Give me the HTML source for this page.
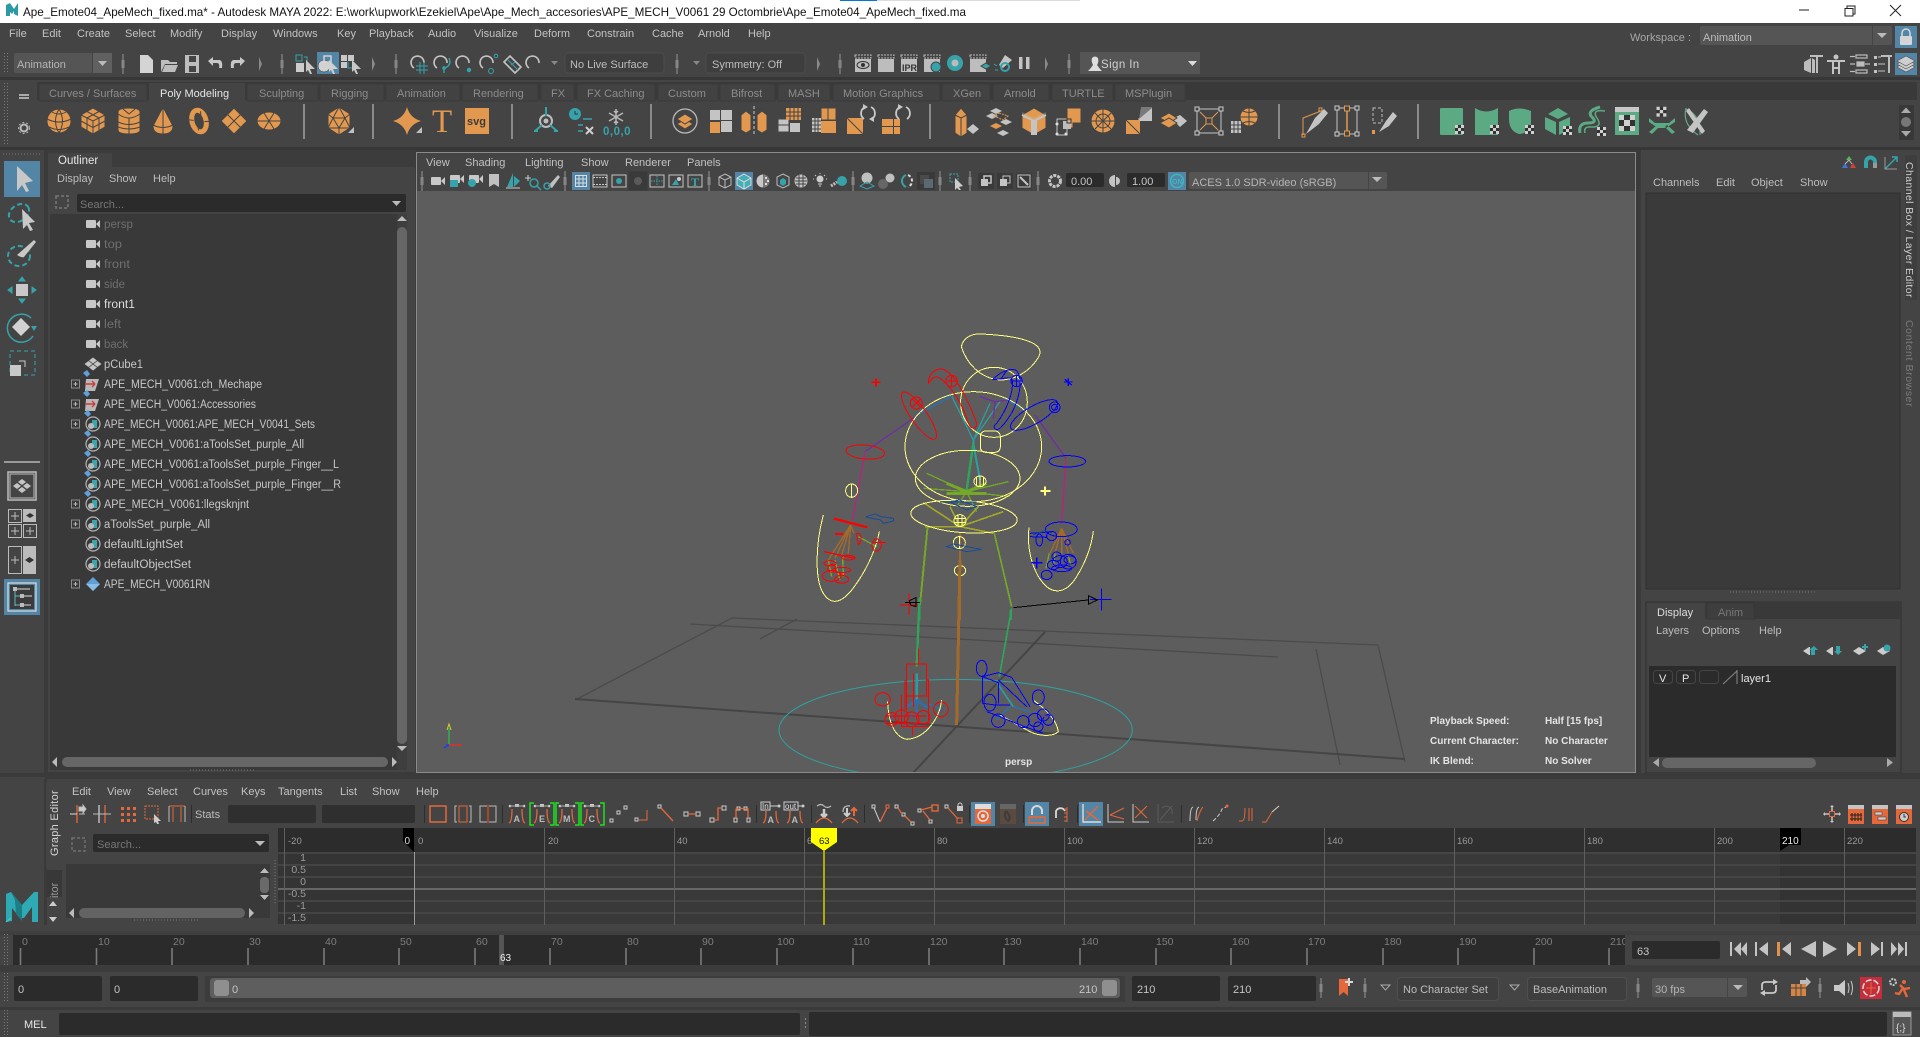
<!DOCTYPE html>
<html><head><meta charset="utf-8"><title>Maya</title>
<style>
html,body{margin:0;padding:0;background:#444;overflow:hidden}
svg{display:block}
text{font-family:"Liberation Sans",sans-serif;font-size:11px;fill:#c2c2c2}
.d{fill:#8c8c8c}.b{fill:#e6e6e6}.o{font-size:11.5px;fill:#c8c8c8}.od{font-size:11.5px;fill:#6f6f6f}
.h{font-weight:bold;font-size:10px;fill:#e4e4e4}
.t{font-size:10.5px;fill:#7d7d7d}.g{font-size:9.5px;fill:#9a9a9a}
.or{fill:#e2994f;stroke:#444;stroke-width:1}
.orn{fill:none;stroke:#444;stroke-width:1}
.gy{fill:#c4c4c4}
.ln{fill:none;stroke:#c4c4c4;stroke-width:1.5}
.te{fill:#36a3ab}.tl{fill:none;stroke:#36a3ab;stroke-width:1.6}
.gr{fill:#5caa84}
.r{fill:none;stroke:#e4683a;stroke-width:1.3}
.rf{fill:#e4683a}
.w{fill:none;stroke:#bdbdbd;stroke-width:1.2}
.wf{fill:#bdbdbd}
</style></head><body>
<svg xmlns="http://www.w3.org/2000/svg" width="1920" height="1037" viewBox="0 0 1920 1037">
<defs>
<clipPath id="vp"><rect x="417" y="191" width="1218" height="581"/></clipPath>
<clipPath id="sl"><rect x="13" y="935" width="1612" height="30"/></clipPath>
<g id="sep"><rect x="-1" y="-10" width="2" height="20" fill="#6d6d6d"/><rect x="-1.5" y="-4" width="3" height="8" fill="#868686"/></g>
<path id="tri" d="M-1-7L2 0L-1 7Z" fill="#8a8a8a"/>
<g id="cam"><rect x="-7" y="-4" width="10" height="8" rx="1" fill="#c8c8c8"/><path d="M3 0L7-4V4Z" fill="#c8c8c8"/></g>
<g id="exp"><rect x="-4" y="-4" width="8" height="8" fill="none" stroke="#8c8c8c"/><path d="M-2 0H2M0-2V2" stroke="#bbb"/></g>
<g id="set"><path d="M-9-11L-5-14L-2-10L-5-7Z" fill="#5fa0d8"/><circle cx="0" cy="0" r="7" fill="none" stroke="#b4b4b4" stroke-width="1.2"/><path d="M-1-4H4V4H-1Z" fill="#3ea4ab"/><circle cx="-2" cy="2" r="3" fill="#bbb"/></g>
<g id="set0"><circle cx="0" cy="0" r="7" fill="none" stroke="#b4b4b4" stroke-width="1.2"/><path d="M-1-4H4V4H-1Z" fill="#3ea4ab"/><circle cx="-2" cy="2" r="3" fill="#bbb"/></g>
<g id="chr"><path d="M-9-11L-5-14L-2-10L-5-7Z" fill="#5fa0d8"/><path d="M-6-5H7L3 7H-7Z" fill="#b8b8b8"/><path d="M-7 0H3M3 0L0-3M3 0L0 3" stroke="#d03a3a" stroke-width="1.4" fill="none"/></g>
<g id="ck"><rect width="9" height="9" fill="#333"/><path d="M0 0h3v3H0zM6 0h3v3H6zM3 3h3v3H3zM0 6h3v3H0zM6 6h3v3H6z" fill="#d0d0d0"/></g>
<g id="clap"><rect x="-8" y="-9" width="16" height="3" fill="none" stroke="#bbb" stroke-dasharray="2 1"/><rect x="-8" y="-5" width="16" height="13" fill="#bdbdbd"/></g>
<g id="dia"><path d="M0-3L4 0L0 3L-4 0Z" fill="#c4c4c4"/></g>
<path id="mag" d="M-4 6A6.500 6.500 0 1 1 6 1" fill="none" stroke="#c4c4c4" stroke-width="1.600"/>
</defs>

<!-- backgrounds -->
<rect width="1920" height="1037" fill="#444"/>
<rect width="1920" height="23" fill="#fff"/>
<rect x="840" width="37" height="1" fill="#0078d7"/><rect x="877" width="203" height="1" fill="#dcdcdc"/>
<path d="M7 16V5L11 3L15 9L19 3V16L15 14V11L13 14L11 12V16Z" fill="#2a9aa5" transform="translate(-1 0)"/>
<text x="23" y="16" textLength="943" lengthAdjust="spacingAndGlyphs" style="font-size:12px;fill:#111">Ape_Emote04_ApeMech_fixed.ma* - Autodesk MAYA 2022: E:\work\upwork\Ezekiel\Ape\Ape_Mech_accesories\APE_MECH_V0061 29 Octombrie\Ape_Emote04_ApeMech_fixed.ma</text>
<path d="M1799 10H1809" stroke="#222"/>
<path d="M1845 8.5H1853V16H1845ZM1847 8.5V6H1855V14H1853" fill="none" stroke="#222"/>
<path d="M1890 5L1901 16M1901 5L1890 16" stroke="#222"/>

<!-- menu -->
<text x="9" y="37">File</text><text x="42" y="37">Edit</text><text x="77" y="37">Create</text><text x="125" y="37">Select</text><text x="170" y="37">Modify</text><text x="221" y="37">Display</text><text x="273" y="37">Windows</text><text x="337" y="37">Key</text><text x="369" y="37">Playback</text><text x="428" y="37">Audio</text><text x="474" y="37">Visualize</text><text x="534" y="37">Deform</text><text x="587" y="37">Constrain</text><text x="652" y="37">Cache</text><text x="698" y="37">Arnold</text><text x="748" y="37">Help</text>
<text x="1630" y="41" class="d" style="fill:#a8a8a8">Workspace :</text>
<rect x="1700" y="26" width="192" height="19" rx="2" fill="#555"/><rect x="1872" y="26" width="1" height="19" fill="#444"/>
<text x="1703" y="41" style="fill:#bdbdbd">Animation</text><path d="M1877 33H1887L1882 38Z" fill="#bbb"/>
<rect x="1895" y="26" width="22" height="22" fill="#5285a6"/><rect x="1900" y="36" width="12" height="9" rx="1" fill="#d5d5d5"/><path d="M1902 36V33a4 4 0 018 0V36" fill="none" stroke="#d5d5d5" stroke-width="1.6"/>
<rect y="77" width="1920" height="3" fill="#373737"/>

<!-- status line -->
<path d="M4.5 53V74M7.5 53V74" stroke="#777" stroke-dasharray="1 2"/>
<rect x="14" y="53" width="98" height="20" rx="2" fill="#555"/><rect x="93" y="53" width="19" height="20" fill="#606060"/><rect x="92" y="53" width="1" height="20" fill="#444"/>
<text x="17" y="68" style="fill:#b5b5b5">Animation</text><path d="M98 61H107L102.500 66Z" fill="#bbb"/>
<use href="#sep" x="123" y="64"/>
<path d="M140 55H148L153 60V73H140Z" fill="#d4d4d4"/>
<path d="M161 60H168L170 62H177V64H165L161 72ZM165 65H178L175 72H162Z" fill="#bdbdbd"/>
<path d="M185 55H199V73H185ZM189 56V62H196V56M189 66H196V72H189Z" fill="#bdbdbd"/><rect x="189" y="56" width="7" height="5" fill="#444"/><rect x="189" y="66" width="7" height="6" fill="#444"/>
<path d="M208 61L213 57V60H219Q223 60 222 68H219Q220 63 217 63H213V66Z" fill="#c8c8c8"/>
<path d="M245 61L240 57V60H234Q230 60 231 68H234Q233 63 236 63H240V66Z" fill="#c8c8c8"/>
<use href="#tri" x="260" y="64"/><use href="#sep" x="282" y="64"/>
<g transform="translate(305 64)"><rect x="-9" y="-9" width="6" height="6" fill="none" stroke="#36a3ab"/><rect x="-9" y="-1" width="8" height="9" fill="#ccc"/><path d="M-1-7H2V-2" fill="none" stroke="#36a3ab"/><path d="M1-4L10 5H5L7 10L5 10L3 6L1 8Z" fill="#c8c8c8"/></g>
<rect x="317" y="52" width="22" height="22" fill="#5285a6"/>
<g transform="translate(328 64)"><circle cx="-4" cy="2" r="6" fill="#d2d2d2" stroke="#222" stroke-width=".5"/><rect x="-4" y="-8" width="7" height="6" fill="none" stroke="#d8d8d8" stroke-width="1.4"/><path d="M1-4L10 5H5L7 10L5 10L3 6L1 8Z" fill="#d0d0d0"/></g>
<g transform="translate(351 64)"><path d="M-10-9H-4V-3H-10ZM-3-9H3V-3H-3ZM-10-2H-4V4H-10Z" fill="#c8c8c8"/><path d="M-3-2V4H1" fill="none" stroke="#36a3ab"/><path d="M1-4L10 5H5L7 10L5 10L3 6L1 8Z" fill="#c8c8c8"/></g>
<use href="#tri" x="373" y="64"/><use href="#sep" x="396" y="64"/>
<use href="#mag" x="418" y="62"/><use href="#mag" x="441" y="62"/><use href="#mag" x="463" y="62"/><use href="#mag" x="487" y="62"/><use href="#mag" x="533" y="62"/>
<path d="M504 62l6-6l11 11l-6 6z" fill="none" stroke="#c4c4c4" stroke-width="1.600"/>
<path d="M416 66H428M416 70H428M420 62V74M424 62V74" stroke="#36a3ab" fill="none"/>
<path d="M449 58Q452 65 445 68M444 68V73" stroke="#36a3ab" fill="none" stroke-width="1.400"/><circle cx="444" cy="68" r="1.800" fill="#36a3ab"/>
<circle cx="469" cy="70" r="2.200" fill="#36a3ab"/>
<circle cx="496" cy="56" r="1.800" fill="none" stroke="#36a3ab"/><circle cx="491" cy="71" r="2.500" fill="none" stroke="#36a3ab"/>
<path d="M508 60L518 70M511 65L515 62" stroke="#36a3ab" fill="none"/>
<path d="M551 61H558L554.500 65Z" fill="#888"/>
<rect x="565" y="53" width="99" height="20" rx="3" fill="#3e3e3e" stroke="#4c4c4c"/><text x="570" y="68" style="fill:#bdbdbd">No Live Surface</text>
<use href="#sep" x="677" y="64"/><path d="M693 61H700L696.500 65Z" fill="#888"/>
<rect x="706" y="53" width="99" height="20" rx="3" fill="#3e3e3e" stroke="#4c4c4c"/><text x="712" y="68" style="fill:#bdbdbd">Symmetry: Off</text>
<use href="#tri" x="818" y="64"/><use href="#sep" x="840" y="64"/>
<use href="#clap" x="863" y="64"/><ellipse cx="863" cy="65" rx="6" ry="3.500" fill="none" stroke="#333"/><circle cx="863" cy="65" r="2" fill="#333"/>
<use href="#clap" x="886" y="64"/>
<use href="#clap" x="909" y="64"/><text x="902" y="71" style="font-size:9px;fill:#333;font-weight:bold">IPR</text>
<use href="#clap" x="932" y="64"/><circle cx="936" cy="67" r="5" fill="#36a3ab" stroke="#444"/>
<circle cx="955" cy="63" r="8" fill="#36a3ab"/><circle cx="955" cy="63" r="3.500" fill="#bbb"/>
<use href="#clap" x="978" y="64"/><path d="M981 66L986 63L991 66L986 69Z" fill="#36a3ab" stroke="#444"/>
<path d="M1005 55L1012 60L1003 68L999 65Z" fill="#c4c4c4"/><circle cx="1005" cy="67" r="4" fill="none" stroke="#36a3ab" stroke-width="2"/><path d="M994 64L997 66M995 70H998" stroke="#36a3ab"/>
<rect x="1019" y="57" width="3.500" height="12" fill="#c4c4c4"/><rect x="1026" y="57" width="3.500" height="12" fill="#c4c4c4"/>
<use href="#tri" x="1046" y="64"/><use href="#sep" x="1069" y="64"/>
<rect x="1080" y="52" width="120" height="22" fill="#555"/>
<path d="M1090 69L1093 65Q1091 61 1092 58Q1095 55 1098 58Q1099 62 1097 65L1100 69L1102 71H1088Z" fill="#ddd"/><text x="1101" y="68" style="fill:#d0d0d0;font-size:11.500px;letter-spacing:.4px">Sign In</text><path d="M1188 61H1197L1192.500 66Z" fill="#ddd"/>
<g transform="translate(1813 64)"><path d="M-9-2L-2-6V9L-9 6Z" fill="#bdbdbd"/><path d="M-1-6L2-4V9L-1 9Z" fill="#bdbdbd"/><path d="M-3-9H10V-7H5V9H3V-7H-3Z" fill="#bdbdbd"/></g>
<g transform="translate(1836 64)"><circle cy="-7" r="2.500" fill="#c4c4c4"/><path d="M-9-3H9M-3-3V4M3-3V4M-3 4V10M3 4V10M-3 4H3" stroke="#c4c4c4" stroke-width="2" fill="none"/></g>
<g transform="translate(1860 64)" class="w"><rect x="-4" y="-9" width="11" height="3"/><rect x="-4" y="6" width="11" height="3"/><path d="M-10-7.500H-5M-10 7.500H-5M-10 0H-5M5 0H10"/><rect x="-3" y="-2" width="7" height="4" fill="#bdbdbd"/></g>
<g transform="translate(1883 64)"><path d="M-9-8h3v3h-3zM-9-1h3v3h-3zM-9 6h3v3h-3z" fill="#c4c4c4"/><path d="M-5-7H-2M-5 0H2M-5 7H2" stroke="#c4c4c4"/><path d="M-2-9H9V-7H7V9H5V-7H-2Z" fill="#bdbdbd"/></g>
<rect x="1895" y="53" width="22" height="22" fill="#5285a6"/>
<g transform="translate(1906 64)" fill="#cfcfcf" stroke="#555" stroke-width=".7"><path d="M-9 3L0 8L9 3L0-2Z"/><path d="M-9 0L0 5L9 0L0-5Z"/><path d="M-9-3L0 2L9-3L0-8Z"/></g>

<!-- shelf -->
<path d="M4.500 83V145M7.500 83V145" stroke="#777" stroke-dasharray="1 2"/>
<rect x="14" y="82" width="1903" height="65" fill="#3e3e3e"/>
<rect x="37" y="82" width="1880" height="18" fill="#393939"/>
<rect x="14" y="82" width="23" height="65" fill="#444"/>
<rect x="19" y="94" width="10" height="2" fill="#aaa"/><rect x="19" y="97" width="10" height="2" fill="#aaa"/>
<circle cx="24" cy="128" r="3.500" fill="none" stroke="#bbb" stroke-width="2"/><circle cx="24" cy="128" r="5.500" fill="none" stroke="#bbb" stroke-dasharray="2 2"/>
<rect x="37" y="100" width="1880" height="47" fill="#444"/>
<g fill="#424242" stroke="#3a3a3a">
<rect x="39" y="84" width="108" height="17"/><rect x="247" y="84" width="71" height="17"/><rect x="320" y="84" width="64" height="17"/><rect x="386" y="84" width="74" height="17"/><rect x="462" y="84" width="76" height="17"/><rect x="541" y="84" width="33" height="17"/><rect x="577" y="84" width="78" height="17"/><rect x="658" y="84" width="60" height="17"/><rect x="720" y="84" width="55" height="17"/><rect x="778" y="84" width="52" height="17"/><rect x="833" y="84" width="107" height="17"/><rect x="942" y="84" width="48" height="17"/><rect x="993" y="84" width="56" height="17"/><rect x="1052" y="84" width="61" height="17"/><rect x="1115" y="84" width="70" height="17"/>
</g>
<rect x="149" y="83" width="96" height="18" fill="#444"/>
<g class="d">
<text class="d" x="49" y="97">Curves / Surfaces</text><text class="b" x="160" y="97">Poly Modeling</text><text class="d" x="259" y="97">Sculpting</text><text class="d" x="331" y="97">Rigging</text><text class="d" x="397" y="97">Animation</text><text class="d" x="473" y="97">Rendering</text><text class="d" x="551" y="97">FX</text><text class="d" x="587" y="97">FX Caching</text><text class="d" x="668" y="97">Custom</text><text class="d" x="731" y="97">Bifrost</text><text class="d" x="788" y="97">MASH</text><text class="d" x="843" y="97">Motion Graphics</text><text class="d" x="953" y="97">XGen</text><text class="d" x="1004" y="97">Arnold</text><text class="d" x="1062" y="97">TURTLE</text><text class="d" x="1125" y="97">MSPlugin</text>
</g>
<!-- shelf separators -->
<g fill="#8a8a8a"><rect x="303" y="104" width="2" height="35"/><rect x="372" y="104" width="2" height="35"/><rect x="511" y="104" width="2" height="35"/><rect x="650" y="104" width="2" height="35"/><rect x="929" y="104" width="2" height="35"/><rect x="1278" y="104" width="2" height="35"/><rect x="1417" y="104" width="2" height="35"/></g>
<!-- poly -->
<g transform="translate(59 121)"><circle r="12" class="or"/><path class="orn" d="M-12-2Q0 4 12-2M-10 6Q0 11 10 6M-7-9Q0-5 7-9M0-12Q-7 0 0 12M0-12Q7 0 0 12"/></g>
<g transform="translate(93 121)"><path class="or" d="M0-13L12-6V6L0 13L-12 6V-6Z"/><path class="orn" d="M-12-6L0 0L12-6M0 0V13M-6-9.500L6-3M6-9.500L-6-3M-12 0L0 6.500L12 0M-6-3V10M6-3V10"/></g>
<g transform="translate(129 121)"><path class="or" d="M-11-9Q-11-13 0-13T11-9V9Q11 13 0 13T-11 9Z"/><path class="orn" d="M-11-7Q-5-3 0-3T11-7M-11 1Q0 6 11 1M-11 6Q0 10 11 6M-6-12L0-7L6-12M0-3V13"/></g>
<g transform="translate(163 121)"><path class="or" d="M0-14L10 5Q10 13 0 13T-10 5Z"/><path class="orn" d="M0-14V13M-10 4Q0 9 10 4"/></g>
<g transform="translate(199 121) rotate(-15)"><ellipse rx="7" ry="11" fill="none" stroke="#e2994f" stroke-width="5"/><path class="orn" d="M-10-4L-5-2M4-9L3-4M10 3L5 2M-3 9L-2 4"/></g>
<g transform="translate(234 121)"><path class="or" d="M0-13L13 0L0 13L-13 0Z"/><path class="orn" d="M-6.500-6.500L6.500 6.500M6.500-6.500L-6.500 6.500"/></g>
<g transform="translate(269 121)"><ellipse rx="12" ry="9" class="or"/><path class="orn" d="M-12 0H12M-5-8L5 8M5-8L-5 8"/></g>
<g transform="translate(339 121)"><path class="or" d="M0-14L11-7V7L0 14L-11 7V-7Z"/><path class="orn" d="M0-14L-6-3L6-3ZM-11-7L-6-3L-11 7M11-7L6-3L11 7M-6-3L0 7L6-3M-11 7L0 7L11 7M0 7V14"/><path d="M9 12L15 6V12Z" fill="#c0c0c0"/></g>
<g transform="translate(407 121)"><path d="M0-14Q3-3 14 0Q3 3 0 14Q-3 3-14 0Q-3-3 0-14Z" fill="#e2994f"/><path d="M9 12L15 6V12Z" fill="#c0c0c0"/></g>
<text x="432" y="132" style="font-family:'Liberation Serif',serif;font-size:33px;fill:#e2994f">T</text>
<rect x="465" y="108" width="24" height="26" fill="#e2994f"/><text x="467" y="125" style="font-size:11px;font-weight:bold;fill:#3a3a3a">svg</text>
<!-- teal tools -->
<g transform="translate(546 121)"><circle r="6" fill="none" stroke="#bdbdbd" stroke-width="2"/><circle r="2.500" fill="#bdbdbd"/><path d="M0-14V-5M-4 4L-11 10M4 4L11 10" stroke="#36a3ab" stroke-width="2"/><path d="M-12 10H-8M8 10H12" stroke="#36a3ab" stroke-width="2"/></g>
<g transform="translate(580 121)"><circle cx="-5" cy="-7" r="6" fill="#36a3ab"/><path d="M-5-10V-7H-2" stroke="#333" fill="none"/><path d="M3-2H12M-2 4H3M-2 10H3" stroke="#36a3ab" stroke-width="1.400"/><path d="M6 6L13 13M13 6L6 13" stroke="#d0d0d0" stroke-width="2"/></g>
<g transform="translate(616 118)" stroke="#b8b8b8" stroke-width="1.500" fill="none"><path d="M0-9V7M-7-5L7 3M7-5L-7 3M-2-7L0-5L2-7M-2 5L0 3L2 5"/></g>
<text x="603" y="135" style="font-size:11.500px;fill:#36a3ab;font-weight:bold;letter-spacing:.5px">0,0,0</text>
<!-- edit mesh -->
<g transform="translate(685 121)"><circle r="12" fill="none" stroke="#b8b8b8" stroke-width="1.300"/><path d="M-8 3L0 8L8 3L0-2Z" fill="#e2994f" stroke="#444"/><path d="M-8-2L0 3L8-2L0-7Z" fill="#e2994f" stroke="#444"/></g>
<g transform="translate(720 121)"><path d="M1-11H12V-1H1ZM-10-11H0V-1H-10ZM1 0H12V11H1Z" fill="#c4c4c4"/><rect x="-10" y="1" width="10" height="11" fill="#e2994f"/></g>
<g transform="translate(754 121)"><path d="M-13-6L-8-10L-3-6V9L-8 12L-13 9Z" class="or"/><path d="M13-6L8-10L3-6V9L8 12L13 9Z" class="or"/><path d="M0-15V15" stroke="#ccc" stroke-dasharray="3 2"/></g>
<g transform="translate(789 121)"><path d="M-11-2H0V11H-11Z" fill="#c4c4c4" stroke="#444"/><rect x="1" y="2" width="10" height="9" fill="#c4c4c4"/><rect x="-3" y="-13" width="15" height="12" fill="#e2994f"/><path d="M-3-9H12M-3-5H12M1-13V-1M5-13V-1M9-13V-1" stroke="#444" fill="none"/><path d="M-11 4H0" stroke="#444"/></g>
<g transform="translate(824 121)"><rect x="-3" y="-13" width="15" height="12" fill="#e2994f" stroke="#444"/><rect x="-3" y="0" width="15" height="12" fill="#e2994f"/><rect x="-12" y="-3" width="9" height="14" fill="#c4c4c4"/><path d="M-12 0H-3M-12 4H-3M-12 8H-3M-9-3V11M-6-3V11M4-13V-1" stroke="#444" fill="none"/></g>
<g transform="translate(860 121)"><path d="M-13-3H3V13H-13Z" fill="#e2994f"/><path d="M-13-3L3 13" stroke="#444"/><path d="M5-14A7 7 0 0 0 4-2M11-14A7 7 0 0 1 12-2" fill="none" stroke="#c8c8c8" stroke-width="1.800"/><path d="M8-14L3-17V-11ZM9-2L14 1V-5Z" fill="#c8c8c8"/></g>
<g transform="translate(895 121)"><path d="M-13-2H-2V5H-13ZM-1-2H5V5H-1ZM-13 6H-2V13H-13ZM-1 6H5V13H-1Z" fill="#e2994f"/><path d="M5-14A7 7 0 0 0 4-2M11-14A7 7 0 0 1 12-2" fill="none" stroke="#c8c8c8" stroke-width="1.800"/><path d="M8-14L3-17V-11Z" fill="#c8c8c8"/></g>
<g transform="translate(964 121)"><path class="or" d="M-9-6L-3-13L3-6V12L-3 16L-9 12Z"/><path class="orn" d="M-9-6L-3-3L3-6M-3-3V16"/><path d="M3 8L9 3L15 8L9 13Z" fill="#c4c4c4"/></g>
<g transform="translate(999 121)"><path d="M-3-13L3-10L-3-7L-9-10Z" fill="#c4c4c4"/><path d="M-13-5L-7-8L-1-5L-7-2ZM1 1L7-2L13 1L7 4ZM-15 0" fill="#c4c4c4"/><path d="M-9 5L-3 2L3 5L-3 8Z" fill="#e2994f"/><path d="M-2 12L4 9L10 12L4 15Z" fill="#c4c4c4"/><path d="M0-8L9-5L4-1L-5-5Z" fill="none" stroke="#e2994f" stroke-dasharray="2 1"/></g>
<g transform="translate(1034 121)"><path class="or" d="M0-13L12-6V7L0 14L-12 7V-6Z"/><path d="M-12-6L0 0L12-6L12-9L0-3L-12-9Z" fill="#c4c4c4" opacity=".3"/><path d="M-3 0V14H3V0Z" fill="#c4c4c4"/><path d="M-12-6L0 0L12-6" stroke="#c4c4c4" stroke-width="2" fill="none"/></g>
<g transform="translate(1069 121)"><path d="M-2-13H12V2H4V7H-2Z" fill="#e2994f" stroke="#444"/><path d="M-12-2H-2V14H-12Z" fill="none" stroke="#c4c4c4"/><rect x="-6" y="0" width="8" height="8" fill="#bdbdbd"/><rect x="-2" y="-2" width="4" height="4" fill="none" stroke="#333"/><circle cx="-12" cy="3" r="1.500" fill="#ddd"/><circle cx="-12" cy="13" r="1.500" fill="#ddd"/><circle cx="-3" cy="13" r="1.500" fill="#ddd"/></g>
<g transform="translate(1103 121)"><circle r="12" class="or"/><path class="orn" d="M-12 0H12M0-12V12M-8-8L8 8M8-8L-8 8"/><circle r="7" class="orn"/></g>
<g transform="translate(1139 121)"><path d="M-13-1H1V13H-13Z" fill="#e2994f"/><path d="M-13-1L1 13" stroke="#444"/><path d="M-1-2L13-14V0L1 0Z" fill="#c4c4c4"/><path d="M2-14H13V-13L0-2Z" fill="#7a7a7a"/></g>
<g transform="translate(1173 121)"><path d="M-6 0L0-4L8 0L0 4Z" fill="#c4c4c4"/><path d="M-1-2L7-6L14 0L7 6Z" fill="#c4c4c4"/><path d="M-13-3L-4-8L4-3L-4 2Z" fill="#e2994f" stroke="#444"/><path d="M-13 2L-4-3L4 2L-4 7Z" fill="#e2994f" stroke="#444"/></g>
<g transform="translate(1209 121)"><rect x="-12" y="-12" width="24" height="24" fill="none" stroke="#c4c4c4"/><rect x="-14" y="-14" width="4" height="4" fill="#444" stroke="#ccc"/><rect x="10" y="-14" width="4" height="4" fill="#444" stroke="#ccc"/><rect x="-14" y="10" width="4" height="4" fill="#444" stroke="#ccc"/><rect x="10" y="10" width="4" height="4" fill="#444" stroke="#ccc"/><rect x="-3" y="-3" width="6" height="6" fill="none" stroke="#e2994f"/><path d="M-9-9L-3-3M9-9L3-3M-9 9L-3 3M9 9L3 3" stroke="#e2994f"/></g>
<g transform="translate(1247 121)"><path d="M-16 0H-6V12H-16Z" fill="#c4c4c4"/><path d="M-16 4H-6M-16 8H-6M-13 0V12M-9 0V12" stroke="#444"/><circle cx="2" cy="-4" r="9" class="or"/><path class="orn" d="M-7-4H11M2-13V5M-4-10Q2-7 8-10M-4 2Q2-1 8 2"/></g>
<!-- pens -->
<g transform="translate(1313 121)"><path d="M-10 14V-3L8-10" fill="none" stroke="#e2994f"/><rect x="6" y="-13" width="3" height="3" fill="none" stroke="#e2994f"/><rect x="-11" y="13" width="3" height="3" fill="none" stroke="#e2994f"/><path d="M-7 13L2-3L11-12L15-8L6 3Z" fill="#c4c4c4"/></g>
<g transform="translate(1347 121)"><rect x="-10" y="-13" width="20" height="26" fill="none" stroke="#c4c4c4"/><path d="M0-11V11" stroke="#e2994f" stroke-width="1.500"/><rect x="-2.500" y="-15" width="5" height="5" fill="#444" stroke="#e2994f"/><rect x="-2.500" y="10" width="5" height="5" fill="#444" stroke="#e2994f"/><rect x="-12" y="-15" width="4" height="4" fill="#444" stroke="#ccc"/><rect x="8" y="-15" width="4" height="4" fill="#444" stroke="#ccc"/><rect x="-12" y="11" width="4" height="4" fill="#444" stroke="#ccc"/><rect x="8" y="11" width="4" height="4" fill="#444" stroke="#ccc"/></g>
<g transform="translate(1382 121)"><rect x="-9" y="-13" width="9" height="15" fill="none" stroke="#bbb" stroke-dasharray="3 2"/><path d="M-3 11L4 0L11-9L15-5L7 5Z" fill="#c4c4c4"/><rect x="-10" y="9" width="3" height="4" fill="#e2994f"/></g>
<!-- green -->
<g transform="translate(1451 121)"><rect x="-11" y="-13" width="23" height="27" class="gr" rx="1"/><use href="#ck" x="4" y="4" /></g>
<g transform="translate(1486 121)"><path d="M-11-13Q0-6 12-13V14H-11Z" class="gr"/><use href="#ck" x="4" y="4"/></g>
<g transform="translate(1521 121)"><path d="M-12-10Q-2-15 10-10V4Q6 13-2 13Q-12 10-12-2Z" class="gr"/><use href="#ck" x="4" y="4"/></g>
<g transform="translate(1558 121)"><path d="M-10-7L0-13L10-7L0-2Z" class="gr"/><path d="M-13-4L-2 1V14L-13 8ZM1 1L12-4V8L1 14Z" class="gr"/><use href="#ck" x="5" y="5"/></g>
<g transform="translate(1592 121)" fill="none" stroke="#5caa84" stroke-width="3"><path d="M-12 12Q-14 2-4 2Q6 2 0-4T8-14"/><path d="M-7 12Q-9 5 0 6Q11 6 5-3T13-10" stroke-width="1.500"/></g><use href="#ck" x="1597" y="127"/>
<g transform="translate(1627 121)"><rect x="-12" y="-14" width="24" height="28" fill="#5caa84"/><rect x="-12" y="-14" width="24" height="5" fill="#c8c8c8"/><rect x="-8" y="-6" width="16" height="16" fill="#333"/><path d="M-8-6h5v5h-5zM3-6h5v5h-5zM-3-1h6v6h-6zM-8 5h5v5h-5zM3 5h5v5h-5z" fill="#d0d0d0"/></g>
<g transform="translate(1662 121)"><path d="M-13-3L-7 2H7L13-3L13 1L4 7H-4L-13 1ZM-13 11L-5 4L-3 6L-10 13ZM13 11L5 4L3 6L10 13Z" class="gr"/><use href="#ck" x="-5" y="-13" transform="scale(1.100)"/></g>
<g transform="translate(1696 121)"><path d="M-10-13Q-14 3 2 14" fill="none" stroke="#5caa84" stroke-width="1.200"/><path d="M-10-12Q5-6 4 14" fill="none" stroke="#5caa84" stroke-width="1.200"/><path d="M-9 9L8-12L12-9L-3 12ZM-10-10L-7-13L9 10L6 13Z" fill="#c4c4c4"/></g>
<!-- shelf scroll -->
<rect x="1899" y="105" width="15" height="35" fill="#383838"/><path d="M1901 113H1911L1906 107.500Z" fill="#aaa"/><circle cx="1906" cy="122" r="5" fill="#777"/><path d="M1901 131H1911L1906 136.500Z" fill="#aaa"/>
<rect y="147" width="1920" height="3" fill="#373737"/>

<!-- toolbox -->
<rect x="44" y="150" width="4" height="627" fill="#3a3a3a"/>
<path d="M3 154H40" stroke="#777" stroke-dasharray="1 2"/>
<rect x="4" y="161" width="36" height="36" fill="#5285a6"/>
<path d="M17 166L33 181L25 183L29 191L26 192L22 185L17 191Z" fill="#c8c8c8"/>
<ellipse cx="19" cy="213" rx="11" ry="8" transform="rotate(-35 19 213)" fill="none" stroke="#36a3ab" stroke-width="2" stroke-dasharray="5 3"/><path d="M22 209L35 222L29 223L33 230L30 231L27 225L23 229Z" fill="#c8c8c8"/>
<ellipse cx="19" cy="256" rx="11" ry="10" fill="none" stroke="#36a3ab" stroke-width="2" stroke-dasharray="5 3"/><path d="M17 255L34 240L36 242L24 257Q22 258 17 255Z" fill="#c8c8c8"/>
<path d="M19 281H25L22 277Z M19 299H25L22 303Z" fill="#36a3ab" stroke="#36a3ab"/><path d="M12 287V293L8 290Z M32 287V293L36 290Z" fill="#36a3ab" stroke="#36a3ab"/><rect x="16" y="284" width="12" height="12" fill="#c8c8c8"/>
<path d="M31 318A14 14 0 1 0 33 336" fill="none" stroke="#36a3ab" stroke-width="1.500"/><path d="M31 326H37L34 331Z" fill="#36a3ab"/><path d="M21 318L30 327L21 336L12 327Z" fill="#d2d2d2"/>
<rect x="10" y="351" width="25" height="24" fill="none" stroke="#36a3ab" stroke-dasharray="4 3"/><rect x="10" y="365" width="11" height="11" fill="#c8c8c8"/><path d="M19 361H25V367" fill="none" stroke="#c8c8c8" stroke-width="1"/>
<rect x="4" y="461" width="36" height="2" fill="#999"/>
<rect x="8" y="472" width="28" height="28" fill="none" stroke="#bbb" stroke-width="1.500"/><rect x="10" y="474" width="24" height="24" fill="#444" stroke="#bbb"/><g transform="translate(22 486)"><use href="#dia" y="-4"/><use href="#dia" y="4"/><use href="#dia" x="-5"/><use href="#dia" x="5"/></g>
<g fill="none" stroke="#bbb"><rect x="8.500" y="509.500" width="13" height="13"/><rect x="8.500" y="524.500" width="13" height="13"/><rect x="23.500" y="524.500" width="13" height="13"/><path d="M11 516H19M15 512V520M11 531H19M15 527V535M26 531H34M30 527V535"/></g>
<rect x="23" y="509" width="13" height="13" fill="#bbb"/><path d="M26 515.500L30 513L34 515.500L30 518Z" fill="#333"/>
<rect x="8.500" y="546.500" width="13" height="27" fill="none" stroke="#bbb"/><path d="M11 560H19M15 556V564" stroke="#bbb"/><rect x="23" y="546" width="13" height="28" fill="#bbb"/><path d="M25 560L29.500 557L34 560L29.500 563Z" fill="#333"/>
<rect x="4" y="579" width="36" height="36" fill="#5285a6"/><rect x="8" y="583" width="28" height="28" fill="none" stroke="#ddd" stroke-width="1.200"/><rect x="10" y="585" width="24" height="24" fill="#3b3b3b"/><path d="M15 591V606M15 596H20M15 605H20" stroke="#5fb9c2"/><rect x="13" y="587" width="4" height="4" fill="#bbb"/><rect x="20" y="594" width="4" height="4" fill="#bbb"/><rect x="20" y="603" width="4" height="4" fill="#bbb"/><path d="M17 589H30M24 596H32M24 605H31" stroke="#ddd"/>

<!-- outliner -->
<rect x="48" y="150" width="367" height="627" fill="#444"/>
<rect x="48" y="150" width="367" height="17" fill="#3c3c3c"/>
<rect x="48" y="153" width="64" height="15" fill="#444"/>
<text x="58" y="164" class="b" style="font-size:11.500px">Outliner</text>
<text x="57" y="182" style="fill:#bdbdbd">Display</text><text x="109" y="182" style="fill:#bdbdbd">Show</text><text x="153" y="182" style="fill:#bdbdbd">Help</text>
<path d="M56 196H68V208H56Z" fill="none" stroke="#777" stroke-width="1.500" stroke-dasharray="3 2"/>
<rect x="77" y="194" width="329" height="18" rx="2" fill="#2b2b2b"/>
<text x="80" y="208" style="fill:#777">Search...</text><path d="M392 201H401L396.500 206Z" fill="#bbb"/>
<rect x="50" y="214" width="357" height="556" fill="#393939"/>
<rect x="397" y="214" width="10" height="556" fill="#3e3e3e"/>
<rect x="397" y="227" width="10" height="517" rx="5" fill="#666"/>
<path d="M397 221H407L402 216Z M397 746H407L402 751Z" fill="#bbb"/>
<use href="#cam" x="93" y="224"/><use href="#cam" x="93" y="244"/><use href="#cam" x="93" y="264"/><use href="#cam" x="93" y="284"/><use href="#cam" x="93" y="304"/><use href="#cam" x="93" y="324"/><use href="#cam" x="93" y="344"/>
<text x="104" y="228" class="od" textLength="29" lengthAdjust="spacingAndGlyphs">persp</text><text x="104" y="248" class="od" textLength="18" lengthAdjust="spacingAndGlyphs">top</text><text x="104" y="268" class="od" textLength="26" lengthAdjust="spacingAndGlyphs">front</text><text x="104" y="288" class="od" textLength="21" lengthAdjust="spacingAndGlyphs">side</text><text x="104" y="308" class="o" style="fill:#ddd" textLength="31" lengthAdjust="spacingAndGlyphs">front1</text><text x="104" y="328" class="od" textLength="17" lengthAdjust="spacingAndGlyphs">left</text><text x="104" y="348" class="od" textLength="24" lengthAdjust="spacingAndGlyphs">back</text>
<g transform="translate(93 364)" fill="#bbb"><use href="#dia" y="-3.500"/><use href="#dia" y="3.500"/><use href="#dia" x="-4.500"/><use href="#dia" x="4.500"/></g><text x="104" y="368" class="o" textLength="39" lengthAdjust="spacingAndGlyphs">pCube1</text>
<use href="#exp" x="75.500" y="384"/><use href="#chr" x="92" y="384"/><text x="104" y="388" class="o" textLength="158" lengthAdjust="spacingAndGlyphs">APE_MECH_V0061:ch_Mechape</text>
<use href="#exp" x="75.500" y="404"/><use href="#chr" x="92" y="404"/><text x="104" y="408" class="o" textLength="152" lengthAdjust="spacingAndGlyphs">APE_MECH_V0061:Accessories</text>
<use href="#exp" x="75.500" y="424"/><use href="#set" x="93" y="424"/><text x="104" y="428" class="o" textLength="211" lengthAdjust="spacingAndGlyphs">APE_MECH_V0061:APE_MECH_V0041_Sets</text>
<use href="#set" x="93" y="444"/><text x="104" y="448" class="o" textLength="200" lengthAdjust="spacingAndGlyphs">APE_MECH_V0061:aToolsSet_purple_All</text>
<use href="#set" x="93" y="464"/><text x="104" y="468" class="o" textLength="235" lengthAdjust="spacingAndGlyphs">APE_MECH_V0061:aToolsSet_purple_Finger__L</text>
<use href="#set" x="93" y="484"/><text x="104" y="488" class="o" textLength="237" lengthAdjust="spacingAndGlyphs">APE_MECH_V0061:aToolsSet_purple_Finger__R</text>
<use href="#exp" x="75.500" y="504"/><use href="#set" x="93" y="504"/><text x="104" y="508" class="o" textLength="145" lengthAdjust="spacingAndGlyphs">APE_MECH_V0061:llegsknjnt</text>
<use href="#exp" x="75.500" y="524"/><use href="#set0" x="93" y="524"/><text x="104" y="528" class="o" textLength="106" lengthAdjust="spacingAndGlyphs">aToolsSet_purple_All</text>
<use href="#set0" x="93" y="544"/><text x="104" y="548" class="o" textLength="79" lengthAdjust="spacingAndGlyphs">defaultLightSet</text>
<use href="#set0" x="93" y="564"/><text x="104" y="568" class="o" textLength="87" lengthAdjust="spacingAndGlyphs">defaultObjectSet</text>
<use href="#exp" x="75.500" y="584"/><path d="M93 577L100 584L93 591L86 584Z" fill="#5fa0d8"/><path d="M86 584H100L93 591Z" fill="#8bbce6"/><text x="104" y="588" class="o" textLength="106" lengthAdjust="spacingAndGlyphs">APE_MECH_V0061RN</text>
<path d="M52 762L57 757V767Z M392 757L397 762L392 767Z" fill="#bbb"/>
<rect x="62" y="757" width="326" height="10" rx="5" fill="#666"/>
<path d="M190 770H255" stroke="#777" stroke-dasharray="1 2"/>
<rect x="48" y="772" width="368" height="5" fill="#3a3a3a"/>

<!-- viewport frame -->
<rect x="415" y="150" width="1226" height="627" fill="#3a3a3a"/>
<rect x="416.500" y="152.500" width="1219" height="620" fill="#444" stroke="#8b8b8b"/>
<text x="426" y="166">View</text><text x="465" y="166">Shading</text><text x="525" y="166">Lighting</text><text x="581" y="166">Show</text><text x="625" y="166">Renderer</text><text x="687" y="166">Panels</text>
<!-- panel toolbar -->
<use href="#sep" x="422" y="181"/><use href="#sep" x="565" y="181"/><use href="#sep" x="709" y="181"/><use href="#sep" x="853" y="181"/><use href="#sep" x="940" y="181"/><use href="#sep" x="970" y="181"/><use href="#sep" x="1038" y="181"/>
<use href="#cam" x="438" y="181"/><use href="#cam" x="457" y="179"/><rect x="450" y="180" width="8" height="7" fill="#36a3ab"/>
<use href="#cam" x="476" y="179"/><circle cx="472" cy="183" r="4" fill="#36a3ab"/>
<path d="M489 174H499V187L494 184L489 187Z" fill="#c0c0c0"/>
<path d="M507 187L513 173V187ZM514 176L520 181L514 187Z" fill="#36a3ab"/><path d="M506 188H520" stroke="#ccc"/>
<circle cx="534" cy="183" r="4" fill="none" stroke="#36a3ab" stroke-width="1.500"/><path d="M537 186L541 190" stroke="#36a3ab" stroke-width="1.500"/><path d="M525 178H531M528 175V181" stroke="#ccc"/>
<path d="M548 186L558 175L560 177L552 188Z" fill="#c0c0c0"/><circle cx="547" cy="186" r="3" fill="none" stroke="#36a3ab" stroke-width="1.500"/>
<rect x="572" y="172" width="18" height="18" fill="#5285a6"/><path d="M575.500 175.500h11v11h-11zM579 175.500v11M583 175.500v11M575.500 179h11M575.500 183h11" fill="none" stroke="#ddd"/>
<rect x="593" y="175" width="14" height="12" fill="none" stroke="#c4c4c4"/><path d="M593 177.500H607M593 184.500H607" stroke="#c4c4c4" stroke-dasharray="2 1"/>
<rect x="612" y="175" width="14" height="12" fill="none" stroke="#c4c4c4"/><circle cx="619" cy="181" r="3" fill="#36a3ab"/>
<rect x="629" y="172" width="18" height="18" fill="#3a3a3a" stroke="#393939"/><circle cx="638" cy="181" r="4" fill="#5a5a5a"/>
<rect x="650" y="175" width="14" height="12" fill="none" stroke="#c4c4c4"/><path d="M651 181H663M657 176V186" stroke="#36a3ab" stroke-dasharray="1.500 1"/>
<rect x="669" y="175" width="14" height="12" fill="none" stroke="#c4c4c4"/><path d="M672 185L676 179L679 185Z" fill="#36a3ab"/><circle cx="679" cy="179" r="2" fill="#ccc"/>
<rect x="688" y="175" width="14" height="12" fill="none" stroke="#c4c4c4"/><text x="691" y="186" style="font-family:'Liberation Serif',serif;font-weight:bold;font-size:12px;fill:#36a3ab">T</text>
<g transform="translate(725 181)" fill="none" stroke="#bbb"><path d="M0-7L6-4V4L0 7L-6 4V-4ZM-6-4L0-1L6-4M0-1V7"/></g>
<rect x="735" y="172" width="18" height="18" fill="#5285a6"/><g transform="translate(744 181)"><path d="M0-7L7-3V4L0 8L-7 4V-3Z" fill="#46aeb6" stroke="#ddd"/><path d="M-7-3L0 1L7-3M0 1V8" fill="none" stroke="#ddd"/></g>
<circle cx="763" cy="181" r="6.500" fill="#c8c8c8"/><path d="M763 174.500A6.500 6.500 0 0 1 763 187.500Z" fill="#777"/><path d="M765 177h2v2h-2zM767 180h2v2h-2zM765 183h2v2h-2z" fill="#ddd"/>
<g transform="translate(783 181)"><path d="M0-7L6-4V4L0 7L-6 4V-4Z" fill="none" stroke="#bbb"/><path d="M-3-1L0-3L3-1V3L0 5L-3 3Z" fill="#36a3ab"/></g>
<circle cx="801" cy="181" r="6.500" fill="#c4c4c4"/><path d="M796 178h10M795 181h12M796 184h10M799 175v12M803 175v12" stroke="#444"/>
<circle cx="820" cy="179" r="3.500" fill="#ccc"/><path d="M820 174V173M814 179H813M827 179H826M815 175L816 176M825 175L824 176M818 184H822M819 186H821" stroke="#ccc"/>
<circle cx="842" cy="181" r="5" fill="#36a3ab"/><path d="M831 186L837 182" stroke="#bbb" stroke-width="3" stroke-dasharray="2 1"/>
<circle cx="867" cy="178" r="5.500" fill="#c0c0c0"/><path d="M860 186L867 182L874 186L867 189Z" fill="none" stroke="#36a3ab"/>
<circle cx="890" cy="178" r="4.500" fill="#c0c0c0"/><circle cx="883" cy="184" r="5" fill="#666"/>
<path d="M906 175A6.500 6.500 0 0 0 906 187" fill="none" stroke="#36a3ab" stroke-width="2"/><path d="M908 175A6.500 6.500 0 0 1 908 187" fill="none" stroke="#ddd" stroke-width="2" stroke-dasharray="3 2"/>
<rect x="917" y="172" width="18" height="18" fill="#3a3a3a"/><rect x="920" y="175" width="9" height="9" fill="#4a4a4a"/><rect x="924" y="179" width="9" height="9" fill="#5a6a70"/>
<rect x="950" y="174" width="8" height="8" fill="none" stroke="#36a3ab" stroke-dasharray="2 1"/><path d="M955 178L963 186L959 187L961 190L959 190L957 188L955 190Z" fill="#ccc"/>
<rect x="978" y="173" width="16" height="16" fill="#3a3a3a"/><path d="M981 179H988V186H981Z" fill="#c4c4c4"/><path d="M984 179V176H991V183H988" fill="none" stroke="#c4c4c4" stroke-width="1.500"/>
<rect x="997" y="173" width="16" height="16" fill="#3a3a3a"/><path d="M1000 179H1007V186H1000Z" fill="#c4c4c4"/><path d="M1003 179V176H1010V183H1007" fill="none" stroke="#c4c4c4"/>
<rect x="1016" y="173" width="16" height="16" fill="#3a3a3a"/><rect x="1018" y="175" width="12" height="12" fill="none" stroke="#c4c4c4"/><path d="M1020 177L1028 185" stroke="#c4c4c4" stroke-width="2"/>
<circle cx="1055" cy="181" r="5.500" fill="none" stroke="#c4c4c4" stroke-width="3" stroke-dasharray="3 1"/>
<rect x="1066" y="173" width="38" height="14" rx="2" fill="#2b2b2b"/><text x="1071" y="185" style="fill:#c4c4c4">0.00</text>
<path d="M1115 175A6 6 0 0 0 1115 187ZM1116 177A4 4 0 0 1 1116 185" fill="#c4c4c4"/>
<rect x="1127" y="173" width="38" height="14" rx="2" fill="#2b2b2b"/><text x="1132" y="185" style="fill:#c4c4c4">1.00</text>
<rect x="1168" y="172" width="18" height="18" fill="#5285a6"/><circle cx="1177" cy="181" r="6.500" fill="none" stroke="#3fb5bd" stroke-width="1.500"/><text x="1172" y="184" style="font-size:7px;font-weight:bold;fill:#3fb5bd">ON</text>
<rect x="1189" y="172" width="198" height="17" rx="2" fill="#555"/><rect x="1368" y="172" width="1" height="17" fill="#444"/>
<text x="1192" y="186" style="fill:#b5b5b5">ACES 1.0 SDR-video (sRGB)</text><path d="M1372 177H1382L1377 182Z" fill="#bbb"/>

<!-- viewport -->
<rect x="417" y="191" width="1218" height="581" fill="#5d5d5d"/>
<g clip-path="url(#vp)" fill="none">
<g stroke="#4b4b4b" stroke-width="1.300"><path d="M732 618L1378 645M575 700L732 618M690 624L1278 657M797 619L760 639M1378 645L1405 762M1316 649L1340 765"/></g>
<path d="M575 699L1405 759" stroke="#454545" stroke-width="2"/>
<path d="M1045 632L913 773" stroke="#454545" stroke-width="2"/>
<g transform="translate(760 560) scale(.3333)" fill="none">
<ellipse cx="587" cy="510" rx="530" ry="152" stroke="#2da3a3" stroke-width="3"/>
</g>
<g transform="translate(760 320) scale(.3333)" fill="none" stroke-width="3" shape-rendering="crispEdges">
<!-- joints -->
<g stroke="#2a9ea3" stroke-width="4"><path d="M575 228L640 360M690 250L640 360M720 245L640 360"/><path d="M640 360V390M640 370L660 480" stroke-width="6"/></g>
<path d="M640 370L620 510" stroke="#2ea558" stroke-width="7"/>
<g stroke="#2f6ea8" stroke-width="5"><path d="M470 285L575 228M730 235L800 272"/></g>
<path d="M475 285L315 395M825 285L918 415M660 230L705 245L745 240M705 245L700 295" stroke="#6d2fa0" stroke-width="4"/>
<path d="M315 395L278 600M918 420L905 610" stroke="#a62d7c" stroke-width="5"/>
<path d="M620 515L500 460M620 515L745 485M620 515L490 505M620 515L748 530M620 515L650 575M620 515L590 560" stroke="#74a826" stroke-width="4"/>
<path d="M560 490L620 515L680 490M560 520H680" stroke="#74a826" stroke-width="9"/>
<path d="M600 620L495 620M600 620L700 640M600 620L490 548M600 620L730 575M600 620L655 560M600 620L570 560" stroke="#a3a526" stroke-width="5"/>
<path d="M503 618L480 855" stroke="#74a826" stroke-width="6"/><path d="M703 640L755 860" stroke="#74a826" stroke-width="5"/>
<path d="M600 640V900" stroke="#a56a2a" stroke-width="5"/>
<path d="M478 835V900M752 870V900" stroke="#2ea558" stroke-width="7"/>
<g stroke="#a56a2a" stroke-width="4"><path d="M272 615L205 720M272 615L225 715M272 615L245 705M272 615L265 700M272 615L282 640M905 625L870 700M905 625L885 700M905 625L905 700M905 625L925 700M905 625L940 700"/></g>
<g stroke="#7fa32e" stroke-width="4"><path d="M205 720L215 770M225 720L240 780M248 710L250 770M295 650L350 680M868 700L858 745M885 700L880 740M925 705L932 735"/></g>
<!-- yellow controls -->
<g stroke="#ffff80">
<path d="M604 80C610 50 640 40 665 42C720 45 780 50 820 70C845 85 845 100 830 120C810 150 770 180 720 180C660 175 620 130 604 80Z"/>
<ellipse cx="702" cy="247" rx="100" ry="105"/>
<ellipse cx="640" cy="380" rx="205" ry="165"/>
<ellipse cx="623" cy="475" rx="157" ry="84"/>
<ellipse cx="612" cy="590" rx="160" ry="48" transform="rotate(4 612 590)"/>
<rect x="661" y="333" width="60" height="64" rx="16"/>
<ellipse cx="660" cy="484" rx="18" ry="16"/><path d="M660 468V500M650 470V498M670 470V498"/>
<ellipse cx="275" cy="512" rx="18" ry="20"/><path d="M275 492V532"/>
<circle cx="600" cy="602" r="18"/><path d="M582 595H618M582 608H618M594 585V620M606 585V620"/>
<circle cx="598" cy="668" r="18"/><path d="M598 650V686"/>
<ellipse cx="600" cy="752" rx="17" ry="15"/><path d="M600 737V767"/>
<path d="M842 513H872M855 500V526" stroke-width="5"/>
<path d="M190 585C165 680 165 780 190 820C215 860 250 850 290 790C325 740 350 680 358 635"/>
<path d="M807 622C800 680 815 750 850 790C880 825 920 820 950 770C975 730 995 680 1000 633"/>
</g>
<!-- red -->
<g stroke="#ff0000">
<ellipse cx="316" cy="396" rx="58" ry="21" transform="rotate(5 316 396)"/>
<ellipse cx="477" cy="287" rx="85" ry="24" transform="rotate(55 477 287)"/>
<path d="M505 190C505 160 530 140 555 150C590 170 625 240 650 310C650 330 635 330 625 310C610 250 560 180 530 170C515 172 510 185 505 190Z"/>
<circle cx="469" cy="249" r="18"/><path d="M458 238L480 260M480 238L458 260"/><circle cx="575" cy="183" r="17"/><path d="M563 183H587M575 170V196"/>
<path d="M335 187H362M348 175V200" stroke-width="5"/>
<path d="M222 596L322 622" stroke-width="7"/><path d="M225 642H250" stroke-width="7"/><path d="M192 695L285 715" stroke-width="4"/>
<ellipse cx="265" cy="713" rx="20" ry="7"/><ellipse cx="210" cy="730" rx="18" ry="8"/><ellipse cx="215" cy="768" rx="28" ry="16"/><ellipse cx="245" cy="778" rx="21" ry="12"/><ellipse cx="245" cy="750" rx="27" ry="8"/><circle cx="215" cy="745" r="12"/><path d="M298 640Q310 660 295 675L290 640ZM340 668H378" stroke-width="3"/><ellipse cx="350" cy="675" rx="14" ry="18"/>
<path d="M447 820V885M418 855H480"/>
</g>
<!-- blue -->
<g stroke="#0000ff">
<ellipse cx="922" cy="424" rx="55" ry="17"/>
<ellipse cx="822" cy="285" rx="80" ry="26" transform="rotate(-30 822 285)"/>
<path d="M700 178C720 155 765 135 775 160C790 190 775 270 720 325C705 335 695 320 710 310C740 270 765 210 755 175C735 170 720 180 700 178Z"/>
<path d="M740 152L722 178"/>
<circle cx="770" cy="183" r="17"/><path d="M755 183H787M770 168V198"/><circle cx="884" cy="262" r="16"/><circle cx="884" cy="262" r="9"/>
<path d="M912 186H938M925 175V198M915 178L935 195" stroke-width="4"/>
<ellipse cx="904" cy="628" rx="48" ry="22"/>
<ellipse cx="838" cy="660" rx="10" ry="18"/><ellipse cx="875" cy="648" rx="15" ry="14"/><path d="M810 640L880 635M810 650L860 652"/>
<circle cx="923" cy="667" r="8"/>
<ellipse cx="860" cy="765" rx="16" ry="14"/><ellipse cx="880" cy="735" rx="18" ry="14"/><ellipse cx="900" cy="725" rx="22" ry="18"/><ellipse cx="925" cy="725" rx="24" ry="22"/><ellipse cx="905" cy="745" rx="30" ry="10"/><ellipse cx="930" cy="720" rx="18" ry="12"/><circle cx="890" cy="710" r="14"/>
<path d="M830 712V745M814 728H847" stroke-width="5"/>
<path d="M1025 805V872M990 838H1055"/>
</g>
<path d="M570 546L598 540L650 560L620 570ZM540 546H650M320 590L345 582L362 590L400 595L400 603L370 610L362 600L320 592ZM560 680L580 672L620 680L665 688L620 695ZM820 645L860 630" stroke="#174c9a"/>
<g stroke="#000"><path d="M760 863L985 840"/><path d="M985 827L1012 840L985 853Z"/><path d="M448 842L468 833V860L452 855ZM435 848H480" stroke-width="3"/></g>
</g>
<g transform="translate(760 560) scale(.3333)" fill="none" stroke-width="3" shape-rendering="crispEdges">
<path d="M478 130L470 320" stroke="#2ea558" stroke-width="7"/>
<path d="M755 145L718 350" stroke="#2ea558" stroke-width="5"/>
<path d="M600 0L590 495" stroke="#a56a2a" stroke-width="9"/>
<path d="M470 340V420" stroke="#2a9ea3" stroke-width="7"/>
<path d="M712 370L760 440" stroke="#2a9ea3" stroke-width="5"/>
<path d="M470 420L435 445M470 420L505 445M470 420V470" stroke="#2f6ea8" stroke-width="8"/>
<path d="M505 430L545 450M760 440L810 455M750 440L710 480" stroke="#2f6ea8" stroke-width="5"/>
<path d="M383 425C385 480 400 530 440 538C500 535 540 470 545 420" stroke="#ffff80"/>
<path d="M822 422C860 450 890 480 895 515C880 530 840 530 810 515L720 465" stroke="#ffff80"/>
<g stroke="#ff0000">
<path d="M475 265V312M440 312H500V405M435 360V450M500 360H505V480M440 312V450M435 408H505M460 340V440M425 405V500H505M458 500V527"/>
<ellipse cx="368" cy="418" rx="23" ry="20"/>
<ellipse cx="543" cy="448" rx="22" ry="22"/>
<circle cx="395" cy="478" r="20"/><circle cx="425" cy="470" r="20"/><circle cx="455" cy="478" r="22"/><circle cx="490" cy="472" r="20"/><path d="M375 490H510M380 468H500"/>
</g>
<g stroke="#0000ff">
<ellipse cx="665" cy="325" rx="16" ry="24"/>
<path d="M668 350L715 338L755 352L810 440M668 350V430M715 360L800 440M668 430L705 435L750 435M668 350L715 368V430"/>
<ellipse cx="690" cy="428" rx="18" ry="25"/>
<ellipse cx="835" cy="412" rx="18" ry="22"/>
<path d="M680 455L720 470L780 495L850 520"/>
<ellipse cx="715" cy="482" rx="20" ry="20"/>
<circle cx="790" cy="485" r="18"/><circle cx="825" cy="480" r="20"/><circle cx="850" cy="465" r="18"/><circle cx="865" cy="480" r="16"/><circle cx="835" cy="500" r="14"/>
</g>
<path d="M390 470h6v6h-6zM450 465h6v6h-6zM540 450h6v6h-6zM712 484h6v6h-6zM825 478h6v6h-6zM850 465h6v6h-6z" fill="#7a3a8a" stroke="none"/>
</g>
<!-- axis -->
<path d="M449 745V728" stroke="#30b050" stroke-width="1.500"/><path d="M449 745H462" stroke="#e03030" stroke-width="1.500"/><path d="M449 745L444 748M449 745H446" stroke="#2040e0" stroke-width="1.500"/><path d="M447 730L449 724L451 730" stroke="#d8d020"/>
</g>
<text x="1430" y="724" class="h">Playback Speed:</text><text x="1545" y="724" class="h">Half  [15 fps]</text>
<text x="1430" y="744" class="h">Current Character:</text><text x="1545" y="744" class="h">No Character</text>
<text x="1430" y="764" class="h">IK Blend:</text><text x="1545" y="764" class="h">No Solver</text>
<text x="1005" y="765" class="h">persp</text>

<!-- right panels -->
<rect x="1641" y="150" width="262" height="627" fill="#444"/>
<rect x="1636" y="150" width="5" height="627" fill="#3a3a3a"/>
<rect x="1903" y="150" width="17" height="627" fill="#444"/>
<path d="M1849 156L1852 160H1846Z" fill="#5bb25b"/><path d="M1842 168L1845 163L1848 168Z" fill="#3a76d8"/><path d="M1850 168L1853 163L1856 168Z" fill="#d84040"/><path d="M1849 160L1845 164M1849 160L1852 164" stroke="#bbb"/>
<path d="M1864 168V162A6.500 6.500 0 0 1 1877 162V168H1873V162A2.500 2.500 0 0 0 1868 162V168Z" fill="#36a3ab"/><path d="M1873 168V163H1877V168Z" fill="#999"/>
<path d="M1885 169L1897 157M1892 157H1897V162" fill="none" stroke="#36a3ab" stroke-width="1.500"/><path d="M1885 157V169H1897" fill="none" stroke="#999"/>
<text x="1653" y="186" style="fill:#bdbdbd">Channels</text><text x="1716" y="186" style="fill:#bdbdbd">Edit</text><text x="1751" y="186" style="fill:#bdbdbd">Object</text><text x="1800" y="186" style="fill:#bdbdbd">Show</text>
<rect x="1646" y="193" width="254" height="396" fill="#3a3a3a" stroke="#303030"/>
<path d="M1730 592H1815" stroke="#777" stroke-dasharray="1 2"/>
<rect x="1905" y="155" width="12" height="145" fill="#3e3e3e"/>
<text transform="translate(1906 162) rotate(90)" x="0" y="0" class="b" style="font-size:10.500px;fill:#d0d0d0;letter-spacing:.4px">Channel Box / Layer Editor</text>
<text transform="translate(1906 320) rotate(90)" x="0" y="0" style="font-size:10.500px;fill:#7b7b7b;letter-spacing:.6px">Content Browser</text>
<rect x="1646" y="602" width="255" height="171" fill="#444" stroke="#2f2f2f"/>
<rect x="1647" y="603" width="253" height="16" fill="#393939"/>
<rect x="1647" y="603" width="58" height="16" fill="#444"/><rect x="1707" y="603" width="47" height="16" fill="#3e3e3e" stroke="#383838"/>
<text x="1657" y="616" class="b" style="fill:#ddd">Display</text><text x="1718" y="616" style="fill:#777">Anim</text>
<text x="1656" y="634" style="fill:#bdbdbd">Layers</text><text x="1702" y="634" style="fill:#bdbdbd">Options</text><text x="1759" y="634" style="fill:#bdbdbd">Help</text>
<path d="M1803 651L1809 647H1810V655H1809Z" fill="#ccc"/><path d="M1811 655V650H1809L1814 646L1818 650H1815V655Z" fill="#36a3ab"/>
<path d="M1826 651L1832 647H1833V655H1832Z" fill="#ccc"/><path d="M1836 646V651H1834L1838 655L1842 651H1840V646Z" fill="#36a3ab"/>
<path d="M1853 651L1859 647L1866 651L1859 655Z" fill="#ccc"/><path d="M1862 647H1868M1865 644V650" stroke="#36a3ab" stroke-width="2"/>
<path d="M1877 651L1883 647L1890 651L1883 655Z" fill="#ccc"/><circle cx="1887" cy="648" r="3.500" fill="#36a3ab"/>
<rect x="1649" y="666" width="247" height="91" fill="#2b2b2b"/>
<g fill="#2b2b2b" stroke="#454545"><rect x="1653.500" y="670.500" width="19" height="13" rx="3"/><rect x="1676.500" y="670.500" width="19" height="13" rx="3"/><rect x="1699.500" y="670.500" width="19" height="13" rx="3"/></g>
<text x="1659" y="682" class="b">V</text><text x="1682" y="682" class="b">P</text>
<path d="M1723 684L1737 671M1737 670V684" fill="none" stroke="#888"/>
<text x="1741" y="682" class="b">layer1</text>
<path d="M1659 758V767L1653 762.500Z M1887 758V767L1893 762.500Z" fill="#aaa"/>
<rect x="1662" y="758" width="154" height="10" rx="5" fill="#666"/>

<!-- bottom divider -->
<rect y="773" width="1920" height="6" fill="#3a3a3a"/>

<!-- graph editor -->
<rect y="779" width="1920" height="151" fill="#444"/>
<rect x="0" y="777" width="45" height="153" fill="#444"/>
<rect x="44" y="779" width="3" height="151" fill="#3a3a3a"/>
<rect x="46" y="781" width="16" height="87" rx="2" fill="#444"/>
<text transform="translate(58 856) rotate(-90)" x="0" y="0" class="b" style="font-size:11px;fill:#d4d4d4;letter-spacing:.3px">Graph Editor</text>
<rect x="47" y="870" width="15" height="27" fill="#383838"/>
<text transform="translate(58 898) rotate(-90)" x="0" y="0" style="fill:#999;font-size:11px">itor</text>
<path d="M49 906H57L53 901Z M49 917H57L53 922Z" fill="#ccc"/>
<path d="M6 922V894L11 892L22 905L34 892L38 892V922H32V907L24 918H20L12 908V921Z" fill="#2eaab4"/><path d="M11 892L22 905V921L16 914L15 900ZM38 892L34 920" fill="#1c7d87"/><path d="M6 922L11 918" stroke="#49cdd6"/>
<text x="72" y="795">Edit</text><text x="107" y="795">View</text><text x="147" y="795">Select</text><text x="193" y="795">Curves</text><text x="241" y="795">Keys</text><text x="278" y="795">Tangents</text><text x="340" y="795">List</text><text x="372" y="795">Show</text><text x="416" y="795">Help</text>
<g transform="translate(0 814)">
<g transform="translate(77 0)"><path class="r" d="M0-9V9"/><path d="M-7 0H0" stroke="#ddd"/><path d="M2 0H8M6-7H2V-3H6V-1L9-5L6-9Z" fill="#ccc" stroke="#bbb"/></g>
<g transform="translate(102 0)"><path d="M-3-9V9" stroke="#bbb" stroke-width="1.500"/><path class="r" d="M3-9V9"/><path d="M-9 0H9" stroke="#bbb"/></g>
<g transform="translate(128 0)"><path d="M-7-7h3v3h-3zM-1-7h3v3h-3zM5-7h3v3h-3zM-7-1h3v3h-3zM-1-1h3v3h-3zM5-1h3v3h-3zM-7 5h3v3h-3zM-1 5h3v3h-3zM5 5h3v3h-3z" class="rf"/></g>
<g transform="translate(152 0)"><rect x="-7" y="-8" width="13" height="13" fill="none" stroke="#e4683a" stroke-dasharray="2 1"/><path d="M2 0L9 7L6 7L7 10L5 10L4 8L2 9Z" fill="#ccc"/></g>
<g transform="translate(177 0)"><path d="M-8-8H8M-4-7V8M4-7V8" stroke="#e4683a"/><path d="M-8-8V8M8-8V8" stroke="#bbb"/></g>
</g>
<rect x="191" y="805" width="1" height="18" fill="#2d2d2d"/>
<text x="195" y="818" style="fill:#bdbdbd">Stats</text>
<rect x="228" y="805" width="88" height="18" rx="2" fill="#2f2f2f"/><rect x="322" y="805" width="93" height="18" rx="2" fill="#2f2f2f"/>
<g fill="#2d2d2d"><rect x="424" y="805" width="1" height="18"/><rect x="502" y="805" width="1" height="18"/><rect x="756" y="805" width="1" height="18"/><rect x="811" y="805" width="1" height="18"/><rect x="864" y="805" width="1" height="18"/><rect x="969" y="805" width="1" height="18"/><rect x="1023" y="805" width="1" height="18"/><rect x="1077" y="805" width="1" height="18"/><rect x="1181" y="805" width="1" height="18"/></g>
<rect x="430" y="806" width="16" height="16" fill="none" stroke="#e4683a" stroke-width="1.500"/>
<path d="M457 806H455V822H457M469 806H471V822H469" fill="none" stroke="#bbb"/><rect x="459" y="806" width="8" height="16" fill="none" stroke="#e4683a"/>
<rect x="480" y="806" width="16" height="16" fill="none" stroke="#bbb"/><rect x="487" y="805" width="2" height="18" fill="#a04a2c"/>
<g transform="translate(517 814)"><circle cx="-7" cy="-8" r="1.300" fill="#ccc"/><circle cx="7" cy="-8" r="1.300" fill="#ccc"/><rect x="-2" y="-10" width="4" height="3" fill="#ccc"/><path d="M-7-8H7" stroke="#aaa"/><path class="r" d="M-8 9Q-5 8-5-5M8 9Q5 8 5-5"/><text x="-3.500" y="8" style="font-size:9px;font-weight:bold;fill:#bbb">A</text></g>
<g transform="translate(542 814)"><circle cx="-7" cy="-8" r="1.300" fill="#ccc"/><circle cx="7" cy="-8" r="1.300" fill="#ccc"/><rect x="-2" y="-10" width="4" height="3" fill="#ccc"/><path d="M-7-8H7" stroke="#aaa"/><path class="r" d="M-8 9Q-5 8-5-5M8 9Q5 8 5-5"/><text x="-3" y="8" style="font-size:9px;font-weight:bold;fill:#bbb">E</text></g>
<g transform="translate(567 814)"><circle cx="-7" cy="-8" r="1.300" fill="#ccc"/><circle cx="7" cy="-8" r="1.300" fill="#ccc"/><rect x="-2" y="-10" width="4" height="3" fill="#ccc"/><path d="M-7-8H7" stroke="#aaa"/><path class="r" d="M-8 9Q-5 8-5-5M8 9Q5 8 5-5"/><text x="-4" y="8" style="font-size:9px;font-weight:bold;fill:#bbb">M</text></g>
<g transform="translate(592 814)"><circle cx="-7" cy="-8" r="1.300" fill="#ccc"/><circle cx="7" cy="-8" r="1.300" fill="#ccc"/><rect x="-2" y="-10" width="4" height="3" fill="#ccc"/><path d="M-7-8H7" stroke="#aaa"/><path class="r" d="M-8 9Q-5 8-5-5M8 9Q5 8 5-5"/><text x="-3.500" y="8" style="font-size:9px;font-weight:bold;fill:#bbb">C</text></g>
<g fill="none" stroke="#1fe01f" stroke-width="1.500"><path d="M534 803H530V825H534M550 803H554V825H550"/><path d="M559 803H556V825H559M575 803H579V825H575"/><path d="M584 803H581V825H584M600 803H604V825H600"/></g>
<g fill="none" stroke="#ccc"><rect x="610" y="819" width="3" height="3"/><rect x="624" y="806" width="3" height="3"/><rect x="617" y="811" width="3" height="3"/>
<rect x="635" y="818" width="3" height="3"/><path d="M639 820H647V810" stroke="#e4683a"/></g>
<g transform="translate(667 814)"><rect x="-9" y="-9" width="3" height="3" fill="none" stroke="#ccc"/><path class="r" d="M-6-6L6 7"/></g>
<g transform="translate(692 814)"><rect x="-8" y="-2" width="4" height="4" fill="none" stroke="#ccc"/><rect x="4" y="-2" width="4" height="4" fill="none" stroke="#ccc"/><path class="r" d="M-4 0H4"/></g>
<g transform="translate(718 814)"><rect x="-8" y="4" width="4" height="4" fill="none" stroke="#ccc"/><rect x="4" y="-8" width="4" height="4" fill="none" stroke="#ccc"/><path class="r" d="M-4 6H0V-6H4"/></g>
<g transform="translate(742 814)"><rect x="-8" y="4" width="3" height="4" fill="none" stroke="#ccc"/><rect x="5" y="4" width="3" height="4" fill="none" stroke="#ccc"/><rect x="-5" y="-7" width="3" height="3" fill="none" stroke="#ccc"/><rect x="2" y="-7" width="3" height="3" fill="none" stroke="#ccc"/><path class="r" d="M-6 4V-5H-3M6 4V-5H3M-2-5.500H2"/></g>
<g transform="translate(771 814)"><rect x="-10" y="-12" width="9" height="8" fill="none" stroke="#ccc"/><text x="-9" y="-5" style="font-size:8px;fill:#ddd">In</text><path d="M-1-8H8" stroke="#ccc"/><circle cx="8" cy="-8" r="1.500" fill="#ccc"/><path class="r" d="M-8 9Q-5 8-5-3M8 9Q5 8 5-3"/><text x="-3.500" y="9" style="font-size:9px;font-weight:bold;fill:#bbb">A</text></g>
<g transform="translate(795 814)"><rect x="-11" y="-12" width="14" height="8" fill="none" stroke="#ccc"/><text x="-10" y="-5" style="font-size:8px;fill:#ddd">out</text><path d="M3-8H8" stroke="#ccc"/><circle cx="8" cy="-8" r="1.500" fill="#ccc"/><path class="r" d="M-8 9Q-5 8-5-3M8 9Q5 8 5-3"/><text x="-3.500" y="9" style="font-size:9px;font-weight:bold;fill:#bbb">A</text></g>
<g transform="translate(824 814)"><path d="M-7-8Q-3-11 0-8T7-8" class="w"/><path d="M0-5V3M-3 0L0 3L3 0" stroke="#ccc" stroke-width="2.500" fill="none"/><path class="r" d="M-8 9Q0-1 8 9"/></g>
<g transform="translate(850 814)"><path d="M-7-2Q-7-9 0-8" class="w"/><path d="M-3-6V2M-6-1L-3 2L0-1" stroke="#ccc" stroke-width="2" fill="none"/><path d="M4 2V-6M1-3L4-6L7-3" stroke="#e4683a" stroke-width="2" fill="none"/><path class="r" d="M-8 9Q0-1 8 9"/></g>
<g transform="translate(880 814)"><rect x="-8" y="-9" width="3" height="3" fill="none" stroke="#ccc"/><rect x="6" y="-9" width="3" height="3" fill="none" stroke="#e4683a"/><path d="M-6-6L0 8" stroke="#ccc"/><path class="r" d="M0 8L7-6"/></g>
<g transform="translate(904 814)"><rect x="-9" y="-9" width="3" height="3" fill="none" stroke="#ccc"/><rect x="-2" y="-1" width="3" height="3" fill="none" stroke="#ccc"/><rect x="7" y="8" width="3" height="3" fill="none" stroke="#ccc"/><path class="r" d="M-6-6L-2 0M1 2L7 8"/></g>
<g transform="translate(929 814)"><rect x="-11" y="-5" width="3" height="3" fill="none" stroke="#ccc"/><rect x="3" y="-9" width="6" height="6" fill="none" stroke="#e4683a" stroke-width="1.400"/><rect x="0" y="6" width="3" height="3" fill="none" stroke="#ccc"/><path class="r" d="M-8-4L3-7M-6-3L1 6"/></g>
<g transform="translate(954 814)"><rect x="-9" y="-9" width="3" height="3" fill="none" stroke="#ccc"/><path class="r" d="M-6-6L4 5"/><rect x="3" y="4" width="5" height="5" fill="none" stroke="#e4683a"/><rect x="3" y="-8" width="6" height="5" fill="#ccc"/><path d="M4-8V-9A2 2 0 0 1 8-9V-8" fill="none" stroke="#ccc"/></g>
<rect x="971" y="802" width="24" height="24" fill="#5285a6"/><rect x="975" y="804" width="16" height="20" fill="#e4683a"/><rect x="975" y="804" width="16" height="5" fill="#ddd"/><circle cx="983" cy="816" r="5" fill="none" stroke="#ddd" stroke-width="1.500"/><circle cx="983" cy="816" r="2" fill="#ddd"/>
<rect x="1000" y="804" width="16" height="20" fill="#5a4a40"/><rect x="1000" y="804" width="16" height="5" fill="#666"/><path d="M1006 811Q1003 816 1008 821Q1012 817 1006 811" fill="none" stroke="#3d3d3d" stroke-width="2"/>
<rect x="1025" y="802" width="24" height="24" fill="#5285a6"/><path d="M1032 815V811A5 5 0 0 1 1042 811V814" fill="none" stroke="#d8d8d8" stroke-width="2"/><rect x="1029" y="817" width="16" height="6" fill="none" stroke="#e4683a" stroke-width="1.500"/><path d="M1032 816V820M1036 816V820M1040 816V820" stroke="#e4683a"/>
<path d="M1056 818V811A5 5 0 0 1 1065 811" fill="none" stroke="#d8d8d8" stroke-width="1.800"/><path d="M1067 807V822M1064 809H1067M1064 813H1067M1064 817H1067M1064 821H1067" stroke="#e4683a" fill="none"/>
<rect x="1079" y="802" width="24" height="24" fill="#5285a6"/><path d="M1083 804V822H1101" fill="none" stroke="#ddd" stroke-width="1.400"/><path d="M1085 820L1098 806M1086 811L1098 820" stroke="#e4683a" stroke-width="1.500" fill="none"/>
<path d="M1108 804V822H1124" fill="none" stroke="#ccc"/><path d="M1110 815L1124 808M1110 815L1124 819" stroke="#e4683a" fill="none"/>
<path d="M1133 804V822H1149" fill="none" stroke="#ccc"/><path d="M1135 818L1147 806M1135 806L1147 818" stroke="#e4683a" fill="none"/>
<path d="M1158 804V822H1174" fill="none" stroke="#5c5c5c"/><path d="M1160 820L1172 806M1162 808A6 6 0 0 1 1172 814" stroke="#5c5c5c" fill="none"/>
<g fill="none" stroke="#ccc"><path d="M1190 821Q1190 808 1193 807M1196 820Q1196 808 1199 807"/></g><path d="M1197 821Q1200 810 1203 807" stroke="#e4683a" fill="none"/>
<path d="M1213 821Q1220 815 1222 809L1228 806" stroke="#ccc" stroke-dasharray="4 2" fill="none"/><circle cx="1227" cy="806" r="1.500" fill="#e4683a"/>
<path d="M1239 821H1242Q1245 821 1245 808M1249 808V821M1252 808V821" stroke="#e4683a" fill="none"/>
<path d="M1262 822H1266L1272 812L1279 806" stroke="#e4683a" fill="none"/><path d="M1272 812L1279 806" stroke="#ccc"/>
<!-- right icons -->
<g transform="translate(1832 814)"><rect x="-2.500" y="-2.500" width="5" height="5" fill="none" stroke="#e4683a"/><path d="M0-8V-3M0 3V8M-8 0H-3M3 0H8" stroke="#c4c4c4" stroke-width="1.500"/><path d="M-2-7L0-9L2-7ZM-2 7L0 9L2 7ZM-7-2L-9 0L-7 2ZM7-2L9 0L7 2Z" fill="#c4c4c4"/></g>
<g fill="#e4683a"><rect x="1848" y="809" width="16" height="15"/><rect x="1872" y="809" width="16" height="15"/><rect x="1896" y="809" width="16" height="15"/></g>
<g fill="#c4c4c4"><rect x="1848" y="805" width="16" height="4"/><rect x="1872" y="805" width="16" height="4"/><rect x="1896" y="805" width="16" height="4"/></g>
<path d="M1850 815H1862M1850 819H1862M1852 813V821M1855 813V821M1858 813V821M1861 813V821" stroke="#222"/>
<rect x="1875" y="812" width="7" height="3" fill="#ccc" stroke="#333" stroke-width=".5"/><rect x="1878" y="817" width="8" height="3" fill="#ccc" stroke="#333" stroke-width=".5"/>
<circle cx="1904" cy="817" r="4.500" fill="#ccc" stroke="#333"/><path d="M1904 814V817H1906" stroke="#333" fill="none"/>

<!-- outliner in graph -->
<path d="M72 838H85V851H72Z" fill="none" stroke="#6f6f6f" stroke-width="1.500" stroke-dasharray="3 2"/>
<rect x="93" y="834" width="176" height="18" rx="2" fill="#2b2b2b"/><text x="97" y="848" style="fill:#777">Search...</text><path d="M255 841H265L260 846Z" fill="#bbb"/>
<rect x="66" y="864" width="204" height="54" fill="#393939"/>
<rect x="260" y="877" width="9" height="16" rx="4" fill="#6a6a6a"/><path d="M260 873H269L264.500 868Z M260 895H269L264.500 900Z" fill="#bbb"/>
<rect x="79" y="908" width="166" height="10" rx="5" fill="#636363"/><path d="M74 908V918L69 913ZM249 908V918L254 913Z" fill="#bbb"/>
<path d="M134 920H200" stroke="#777" stroke-dasharray="1 2"/><path d="M275 860V905" stroke="#777" stroke-dasharray="1 2"/>

<!-- graph -->
<rect x="278" y="828" width="1638" height="24" fill="#2f2f2f"/>
<rect x="278" y="852" width="1638" height="73" fill="#393939"/>
<rect x="278" y="852" width="136" height="73" fill="#343434"/><rect x="1780" y="852" width="136" height="73" fill="#333"/>
<rect x="278" y="828" width="136" height="24" fill="#2c2c2c"/><rect x="1780" y="828" width="136" height="24" fill="#2c2c2c"/>
<g stroke="#474747" stroke-width="1.700"><path d="M278 853H1916M278 865H1916M278 877H1916M278 901H1916M278 913H1916M278 925H1916"/></g>
<path d="M278 889H1916" stroke="#6e6e6e" stroke-width="1.700"/>
<g stroke="#5f5f5f"><path d="M284.500 828V925M544.500 828V925M674.500 828V925M804.500 828V925M934.500 828V925M1064.500 828V925M1194.500 828V925M1324.500 828V925M1454.500 828V925M1584.500 828V925M1714.500 828V925M1844.500 828V925"/></g>
<path d="M414.500 852V925" stroke="#9a9a9a"/>
<g class="g"><text x="288" y="844" class="g">-20</text><text x="418" y="844" class="g">0</text><text x="548" y="844" class="g">20</text><text x="677" y="844" class="g">40</text><text x="807" y="844" class="g">60</text><text x="937" y="844" class="g">80</text><text x="1067" y="844" class="g">100</text><text x="1197" y="844" class="g">120</text><text x="1327" y="844" class="g">140</text><text x="1457" y="844" class="g">160</text><text x="1587" y="844" class="g">180</text><text x="1717" y="844" class="g">200</text><text x="1847" y="844" class="g">220</text></g>
<g text-anchor="end"><text x="306" y="861" class="g" style="font-size:10.500px" text-anchor="end">1</text><text x="306" y="873" class="g" style="font-size:10.500px" text-anchor="end">0.5</text><text x="306" y="885" class="g" style="font-size:10.500px" text-anchor="end">0</text><text x="306" y="897" class="g" style="font-size:10.500px" text-anchor="end">-0.5</text><text x="306" y="909" class="g" style="font-size:10.500px" text-anchor="end">-1</text><text x="306" y="921" class="g" style="font-size:10.500px" text-anchor="end">-1.5</text></g>
<path d="M403 828H414V852L403 841Z" fill="#000"/><text x="404.500" y="844" style="font-size:10px;fill:#ddd">0</text>
<path d="M1780 828H1801V845H1789L1780 851Z" fill="#000"/><text x="1782" y="844" style="font-size:10px;fill:#eee">210</text>
<path d="M811 828H837V842L824 851L811 842Z" fill="#ff0"/><text x="819" y="844" style="font-size:9.500px;fill:#111">63</text>
<rect x="823" y="851" width="2" height="74" fill="#abab10"/>

<!-- time slider -->
<rect y="925" width="1920" height="10" fill="#444"/>
<rect x="0" y="931" width="1920" height="4" fill="#3c3c3c" opacity=".6"/>
<path d="M4.500 934V968M7.500 934V968" stroke="#777" stroke-dasharray="1 2"/>
<rect x="13" y="935" width="1612" height="30" fill="#2b2b2b"/>
<g clip-path="url(#sl)">
<g stroke="#7a7a7a" stroke-width="1.600"><path d="M20.500 948V965M96.500 948V965M172 948V965M248 948V965M324 948V965M399 948V965M475 948V965M550 948V965M626 948V965M701 948V965M777 948V965M853 948V965M929 948V965M1004 948V965M1080 948V965M1156 948V965M1231 948V965M1307 948V965M1383 948V965M1458 948V965M1534 948V965M1609 948V965"/></g>
<rect x="499" y="935" width="5" height="30" fill="#555"/>
<text x="22" y="945" class="t">0</text><text x="98" y="945" class="t">10</text><text x="173" y="945" class="t">20</text><text x="249" y="945" class="t">30</text><text x="325" y="945" class="t">40</text><text x="400" y="945" class="t">50</text><text x="476" y="945" class="t">60</text><text x="551" y="945" class="t">70</text><text x="627" y="945" class="t">80</text><text x="702" y="945" class="t">90</text><text x="777" y="945" class="t">100</text><text x="853" y="945" class="t">110</text><text x="930" y="945" class="t">120</text><text x="1004" y="945" class="t">130</text><text x="1081" y="945" class="t">140</text><text x="1156" y="945" class="t">150</text><text x="1232" y="945" class="t">160</text><text x="1308" y="945" class="t">170</text><text x="1384" y="945" class="t">180</text><text x="1459" y="945" class="t">190</text><text x="1535" y="945" class="t">200</text><text x="1610" y="945" class="t">210</text>
<text x="500" y="961" style="font-size:10px;fill:#eee">63</text>
</g>
<rect x="1632" y="941" width="88" height="18" rx="2" fill="#2b2b2b"/><text x="1637" y="955" style="fill:#c4c4c4">63</text>
<g fill="#c4c4c4"><path d="M1730 942h2v14h-2zM1741 942V956L1734 949ZM1747 942V956L1741 949Z"/><path d="M1755 942h2v14h-2zM1768 942V956L1759 949Z"/><rect x="1777" y="942" width="3" height="14" fill="#e2904a"/><path d="M1791 942V956L1782 949Z"/><path d="M1816 941V957L1801 949Z"/><path d="M1823 941V957L1837 949Z"/><path d="M1847 942V956L1856 949Z"/><rect x="1858" y="942" width="3" height="14" fill="#e2904a"/><path d="M1871 942V956L1880 949ZM1881 942h2v14h-2z"/><path d="M1891 942V956L1897 949ZM1898 942V956L1904 949ZM1905 942h2v14h-2z"/></g>

<!-- range -->
<rect y="965" width="1920" height="7" fill="#3c3c3c"/>
<rect y="972" width="1920" height="35" fill="#444"/>
<path d="M4.500 973V1003M7.500 973V1003" stroke="#777" stroke-dasharray="1 2"/>
<rect x="14" y="976" width="88" height="25" rx="2" fill="#2b2b2b"/><text x="18" y="993" style="fill:#c4c4c4">0</text>
<rect x="110" y="976" width="88" height="25" rx="2" fill="#2b2b2b"/><text x="114" y="993" style="fill:#c4c4c4">0</text>
<rect x="205" y="976" width="920" height="26" fill="#3c3c3c"/>
<rect x="210" y="978" width="910" height="20" rx="3" fill="#5e5e5e"/>
<rect x="214" y="980" width="15" height="16" rx="3" fill="#8f8f8f"/><text x="232" y="993" style="fill:#c4c4c4">0</text>
<text x="1079" y="993" style="fill:#c4c4c4">210</text><rect x="1102" y="980" width="15" height="16" rx="3" fill="#8f8f8f"/>
<rect x="1132" y="976" width="88" height="25" rx="2" fill="#2b2b2b"/><text x="1137" y="993" style="fill:#c4c4c4">210</text>
<rect x="1228" y="976" width="88" height="25" rx="2" fill="#2b2b2b"/><text x="1233" y="993" style="fill:#c4c4c4">210</text>
<use href="#sep" x="1321" y="988"/><use href="#sep" x="1365" y="988"/><use href="#sep" x="1638" y="988"/><use href="#sep" x="1820" y="988"/>
<path d="M1339 979H1348V996L1343.500 992L1339 996Z" fill="#e4683a"/><path d="M1349 978V986M1345 982H1353" stroke="#d8d8d8" stroke-width="2"/>
<path d="M1381 985H1390L1385.500 990Z" fill="none" stroke="#aaa"/>
<rect x="1397.500" y="977.500" width="101" height="23" rx="3" fill="#3e3e3e" stroke="#4f4f4f"/><text x="1403" y="993" style="fill:#bdbdbd">No Character Set</text>
<path d="M1510 985H1519L1514.500 990Z" fill="none" stroke="#aaa"/>
<rect x="1527.500" y="977.500" width="99" height="23" rx="3" fill="#3e3e3e" stroke="#4f4f4f"/><text x="1533" y="993" style="fill:#bdbdbd">BaseAnimation</text>
<rect x="1652" y="978" width="95" height="19" rx="2" fill="#555"/><rect x="1727" y="978" width="1" height="19" fill="#444"/><text x="1655" y="993" style="fill:#b5b5b5">30 fps</text><path d="M1733 985H1743L1738 990Z" fill="#bbb"/>
<g fill="none" stroke="#c8c8c8" stroke-width="1.800"><path d="M1762 990V985Q1762 982 1766 982H1775M1776 985V990Q1776 993 1772 993H1763"/></g><path d="M1773 979L1778 982L1773 985ZM1765 990L1760 993L1765 996Z" fill="#c8c8c8"/>
<rect x="1791" y="984" width="15" height="12" fill="#d68445"/><path d="M1791 988H1806M1796 984V996M1801 984V996" stroke="#444"/><path d="M1800 980H1806L1806 977L1811 982L1806 987V984H1800Z" fill="#bbb"/>
<path d="M1834 985H1839L1845 980V996L1839 991H1834Z" fill="#c8c8c8"/><path d="M1848 983Q1850 988 1848 993M1851 981Q1854 988 1851 995" fill="none" stroke="#c8c8c8"/>
<rect x="1860" y="977" width="22" height="22" fill="#c62d3a"/><circle cx="1871" cy="988" r="8" fill="none" stroke="#ddd" stroke-dasharray="6 2" stroke-width="1.500"/><path d="M1871 982V994M1866 988H1876" stroke="#e4683a"/>
<circle cx="1893" cy="982" r="3" fill="none" stroke="#c4c4c4" stroke-width="2" stroke-dasharray="2 1"/><circle cx="1904" cy="982" r="2" fill="#e4683a"/><path d="M1900 985L1904 989L1910 988M1903 988L1899 994L1895 993M1904 990L1907 997" stroke="#e4683a" stroke-width="2.400" fill="none"/>

<!-- command line -->
<rect y="1007" width="1920" height="3" fill="#3a3a3a"/>
<rect y="1010" width="1920" height="27" fill="#444"/>
<path d="M4.500 1010V1036M7.500 1010V1036" stroke="#777" stroke-dasharray="1 2"/>
<text x="24" y="1028" class="b" style="font-size:11px">MEL</text>
<rect x="59" y="1013" width="741" height="22" rx="2" fill="#2b2b2b"/>
<rect x="809" y="1012" width="1078" height="24" rx="2" fill="#2b2b2b"/>
<path d="M805.500 1018V1028" stroke="#888" stroke-dasharray="2 2"/>
<rect x="1893" y="1012" width="18" height="23" fill="#555" stroke="#999"/><rect x="1893" y="1012" width="18" height="5" fill="#bbb"/><text x="1896" y="1031" style="font-size:10px;fill:#ddd">{;}</text>
</svg>
</body></html>
